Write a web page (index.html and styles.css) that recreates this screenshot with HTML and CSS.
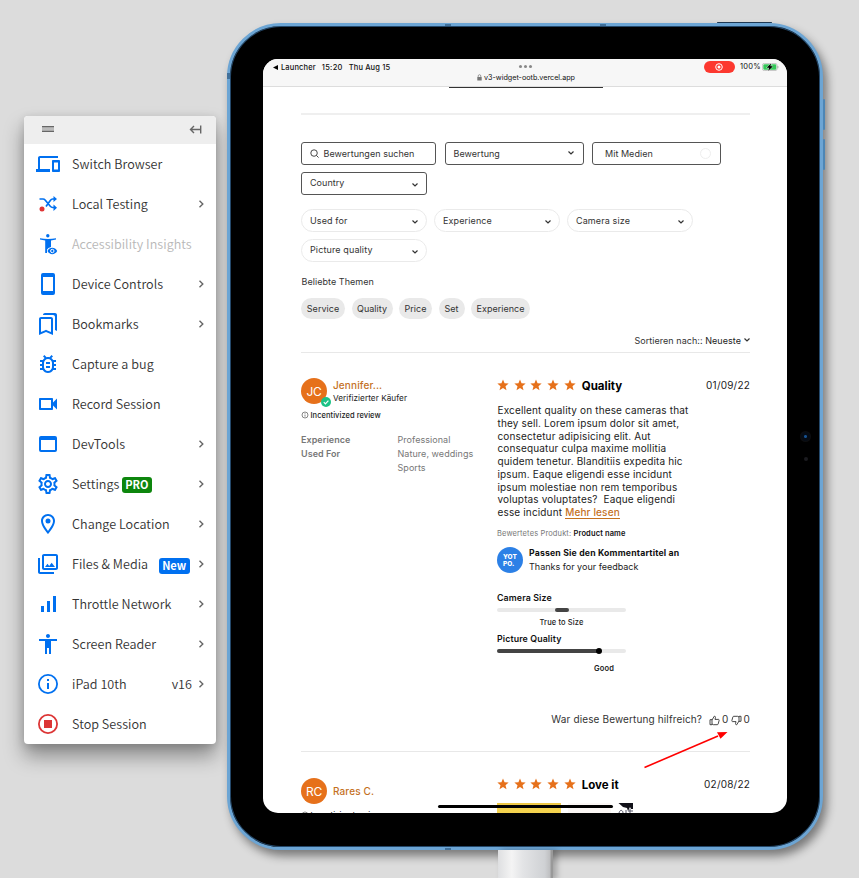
FILE: index.html
```
<!DOCTYPE html>
<html lang="de">
<head>
<meta charset="utf-8">
<title>v3-widget-ootb.vercel.app</title>
<link rel="stylesheet" href="styles.css">
</head>
<body>
<svg class="defs" aria-hidden="true">
  <symbol id="chev" viewBox="0 0 8 8"><path d="M1.500 2.500 4 5l2.500-2.500" fill="none" stroke="currentColor" stroke-width="1.200"/></symbol>
  <symbol id="next" viewBox="0 0 6 10"><path d="M1.500 1.800 4.800 5 1.500 8.200" fill="none" stroke="#666" stroke-width="1.400"/></symbol>
  <symbol id="star" viewBox="0 0 24 24"><path d="M12 1l3.100 7.600 8.200.600-6.300 5.300 2 8L12 18.100 5 22.500l2-8L.7 9.200l8.200-.600z"/></symbol>
  <symbol id="info" viewBox="0 0 8 8"><circle cx="4" cy="4" r="3" fill="none" stroke="#555" stroke-width=".7"/><path d="M4 3.600v2M4 2.200v.7" stroke="#555" stroke-width=".7"/></symbol>
  <symbol id="thumb" viewBox="0 0 11 11"><path d="M1 4.700h2v5H1zM3 5l2.300-3.800c1.200 0 1.300.8 1.100 1.500L6 4.400h3.300c.8 0 1 .5.800 1.100l-.9 3.400c-.2.600-.5.800-1 .8H4.400L3 9" fill="none" stroke="#333" stroke-width=".9" stroke-linejoin="round"/></symbol>
</svg>
<nav class="menu">
  <header class="menu-head">
    <svg class="grip" viewBox="0 0 12 6"><path d="M0 .8h12M0 5.200h12" stroke="#666" stroke-width="1.500"/><path d="M0 3h12" stroke="#bbb" stroke-width="2"/></svg>
    <svg class="collapse" viewBox="0 0 13 9"><path d="M11.700.5v8M11 4.500H1.500M5 1 1.500 4.500 5 8" fill="none" stroke="#666" stroke-width="1.400"/></svg>
  </header>
  <div class="item"><svg viewBox="0 0 24 24"><path d="M4 6h18V4H4c-1.100 0-2 .9-2 2v11H0v3h14v-3H4V6zm19 2h-6c-.55 0-1 .45-1 1v10c0 .55.45 1 1 1h6c.55 0 1-.45 1-1V9c0-.55-.45-1-1-1zm-1 9.500h-4v-7h4z"/></svg><span>Switch Browser</span></div>
  <div class="item"><svg viewBox="0 0 24 24"><path d="M3.500 7H7c1 0 1.600.4 2.300 1.200l5 6.100c.7.800 1.300 1.200 2.300 1.200H19M10 14.500l4.300-6C15 7.500 15.600 7 16.600 7H19" fill="none" stroke="#0070f0" stroke-width="1.700"/><path d="M17.500 4l3.500 3-3.500 3zM17.500 12.500l3.500 3.200-3.500 3.300z"/><circle cx="6" cy="17" r="2.500" fill="#e03535"/></svg><span>Local Testing</span><svg class="next"><use href="#next"/></svg></div>
  <div class="item off"><svg viewBox="0 0 24 24"><circle cx="11.800" cy="3.800" r="1.700"/><path d="M4 6.300c5 1 11 1 16 0v1.300l-5 .8V15l-2.500 1-1.500 1.500V21H9.200V8.400L4 7.600z"/><path d="M11.500 19c2-4.200 7.500-4.200 9.700 0-2.200 4.200-7.700 4.200-9.700 0z"/><circle cx="16.300" cy="19" r="1.700" fill="#0070f0" stroke="#fff"/></svg><span>Accessibility Insights</span></div>
  <div class="item"><svg viewBox="0 0 24 24"><path fill-rule="evenodd" d="M7 1h10a2 2 0 0 1 2 2v18a2 2 0 0 1-2 2H7a2 2 0 0 1-2-2V3a2 2 0 0 1 2-2zm0 4v14h10V5z"/></svg><span>Device Controls</span><svg class="next"><use href="#next"/></svg></div>
  <div class="item"><svg viewBox="0 0 24 24"><path d="M15 7v12.970l-4.210-1.810-.79-.34-.79.34L5 19.970V7h10m4-6H8.990C7.890 1 7 1.900 7 3h10c1.100 0 2 .9 2 2v13l2 1V3c0-1.100-.9-2-2-2zm-4 4H5c-1.100 0-2 .9-2 2v16l7-3 7 3V7c0-1.100-.9-2-2-2z"/></svg><span>Bookmarks</span><svg class="next"><use href="#next"/></svg></div>
  <div class="item"><svg viewBox="0 0 24 24"><path d="M20 8h-2.810c-.45-.78-1.070-1.450-1.820-1.960L17 4.410 15.590 3l-2.170 2.170C12.960 5.060 12.490 5 12 5s-.96.060-1.410.17L8.410 3 7 4.410l1.620 1.630C7.880 6.550 7.260 7.220 6.810 8H4v2h2.090c-.05.33-.09.66-.09 1v1H4v2h2v1c0 .34.04.67.09 1H4v2h2.810c1.040 1.790 2.970 3 5.190 3s4.150-1.210 5.190-3H20v-2h-2.090c.05-.33.09-.66.09-1v-1h2v-2h-2v-1c0-.34-.04-.67-.09-1H20V8zm-4 7c0 2.200-1.800 4-4 4s-4-1.800-4-4v-4c0-2.200 1.800-4 4-4s4 1.800 4 4v4zm-6-1h4v2h-4zm0-4h4v2h-4z"/></svg><span>Capture a bug</span></div>
  <div class="item"><svg viewBox="0 0 24 24"><path d="M15 8v8H5V8h10m1-2H4c-.55 0-1 .45-1 1v10c0 .55.45 1 1 1h12c.55 0 1-.45 1-1v-3.500l4 4v-11l-4 4V7c0-.55-.45-1-1-1z"/></svg><span>Record Session</span></div>
  <div class="item"><svg viewBox="0 0 24 24"><path fill-rule="evenodd" d="M5 4h14a2 2 0 0 1 2 2v12a2 2 0 0 1-2 2H5a2 2 0 0 1-2-2V6a2 2 0 0 1 2-2zm0 4v10h14V8z"/></svg><span>DevTools</span><svg class="next"><use href="#next"/></svg></div>
  <div class="item"><svg viewBox="0 0 24 24"><path d="M19.430 12.980c.04-.32.07-.64.07-.98s-.03-.66-.07-.98l2.110-1.650c.19-.15.24-.42.12-.64l-2-3.460c-.09-.16-.26-.25-.44-.25-.06 0-.12.010-.17.030l-2.490 1c-.52-.4-1.080-.73-1.690-.98l-.38-2.650C14.460 2.180 14.250 2 14 2h-4c-.25 0-.46.18-.49.42l-.38 2.650c-.61.25-1.170.59-1.690.98l-2.490-1c-.06-.02-.12-.03-.18-.03-.17 0-.34.09-.43.25l-2 3.460c-.13.22-.07.49.12.64l2.110 1.650c-.04.32-.07.65-.07.98s.03.66.07.98l-2.110 1.650c-.19.15-.24.42-.12.64l2 3.460c.09.16.26.25.44.25.06 0 .12-.01.17-.03l2.490-1c.52.4 1.080.73 1.690.98l.38 2.650c.03.24.24.42.49.42h4c.25 0 .46-.18.49-.42l.38-2.650c.61-.25 1.170-.59 1.690-.98l2.490 1c.06.02.12.03.18.03.17 0 .34-.09.43-.25l2-3.460c.12-.22.07-.49-.12-.64l-2.110-1.650zm-1.980-1.710c.04.31.05.52.05.73s-.02.43-.05.73l-.14 1.130.89.7 1.080.84-.7 1.210-1.270-.51-1.040-.42-.9.68c-.43.32-.84.56-1.250.73l-1.060.43-.16 1.130-.2 1.350h-1.400l-.19-1.350-.16-1.130-1.060-.43c-.43-.18-.83-.41-1.230-.71l-.91-.7-1.060.43-1.270.51-.7-1.210 1.080-.84.89-.7-.14-1.130c-.03-.31-.05-.54-.05-.74s.02-.43.05-.73l.14-1.130-.89-.7-1.080-.84.7-1.210 1.270.51 1.040.42.9-.68c.43-.32.84-.56 1.250-.73l1.060-.43.16-1.130.2-1.350h1.390l.19 1.350.16 1.130 1.060.43c.43.18.83.41 1.230.71l.91.7 1.060-.43 1.270-.51.7 1.210-1.070.85-.89.7.14 1.130zM12 8c-2.210 0-4 1.790-4 4s1.790 4 4 4 4-1.790 4-4-1.790-4-4-4zm0 6c-1.100 0-2-.9-2-2s.9-2 2-2 2 .9 2 2-.9 2-2 2z"/></svg><span>Settings</span><b class="tag pro">PRO</b><svg class="next"><use href="#next"/></svg></div>
  <div class="item"><svg viewBox="0 0 24 24"><path d="M12 2C8.130 2 5 5.130 5 9c0 5.250 7 13 7 13s7-7.750 7-13c0-3.870-3.130-7-7-7zM7 9c0-2.760 2.240-5 5-5s5 2.240 5 5c0 2.880-2.880 7.190-5 9.880C9.920 16.210 7 11.850 7 9z"/><circle cx="12" cy="9" r="2.500"/></svg><span>Change Location</span><svg class="next"><use href="#next"/></svg></div>
  <div class="item"><svg viewBox="0 0 24 24"><path d="M20 4v12H8V4h12m0-2H8c-1.100 0-2 .9-2 2v12c0 1.100.9 2 2 2h12c1.100 0 2-.9 2-2V4c0-1.100-.9-2-2-2zm-8.500 9.670l1.690 2.260 2.480-3.100L19 15H9zM2 6v14c0 1.100.9 2 2 2h14v-2H4V6H2z"/></svg><span>Files &amp; Media</span><b class="tag new">New</b><svg class="next"><use href="#next"/></svg></div>
  <div class="item"><svg viewBox="0 0 24 24"><path d="M5 14h3v6H5zM11 9h3v11h-3zM17 4h3v16h-3z"/></svg><span>Throttle Network</span><svg class="next"><use href="#next"/></svg></div>
  <div class="item"><svg viewBox="0 0 24 24"><path d="M12 2c1.100 0 2 .9 2 2s-.9 2-2 2-2-.9-2-2 .9-2 2-2zm9 7h-6v13h-2v-6h-2v6H9V9H3V7h18v2z"/></svg><span>Screen Reader</span><svg class="next"><use href="#next"/></svg></div>
  <div class="item"><svg viewBox="0 0 24 24"><circle cx="12" cy="12" r="9.100" fill="none" stroke="#0070f0" stroke-width="1.800"/><path d="M11 11h2v6h-2zM11 7h2v2h-2z"/></svg><span>iPad 10th</span><span class="ver">v16</span><svg class="next"><use href="#next"/></svg></div>
  <div class="item stop"><svg viewBox="0 0 24 24"><circle cx="12" cy="12" r="9.100" fill="none" stroke="#dc3535" stroke-width="1.800"/><path d="M8 8h8v8H8z"/></svg><span>Stop Session</span></div>
</nav>

<main class="tablet">
  <i class="btn power"></i><i class="btn vol1"></i><i class="btn vol2"></i>
  <i class="seam s1"></i><i class="seam s2"></i><i class="seam s3"></i><i class="seam s4"></i>
  <i class="lens"></i><i class="sensor"></i>
  <i class="cable"></i>
  <div class="screen">
    <header class="status">
      <div class="left"><svg viewBox="0 0 5 5"><path d="M5 0v5L0 2.500z"/></svg><span class="launcher">Launcher</span><span class="clock">15:20</span><span class="day">Thu Aug 15</span></div>
      <div class="mid"><div class="dots"><i></i><i></i><i></i></div><div class="url"><svg viewBox="0 0 5 7"><path d="M1.200 3V2a1.300 1.300 0 0 1 2.600 0v1" fill="none" stroke="#777" stroke-width=".7"/><path d="M.3 3h4.400v3.500H.3z" fill="#777"/></svg><span>v3-widget-ootb.vercel.app</span></div></div>
      <div class="right"><i class="rec"><svg viewBox="0 0 8 8"><circle cx="4" cy="4" r="3.300" fill="none" stroke="#fff" stroke-width="1"/><circle cx="4" cy="4" r="1.500" fill="#fff"/></svg></i><span>100%</span><svg class="bat" viewBox="0 0 17 8"><rect x=".4" y=".4" width="14.700" height="7.200" rx="2" fill="#fff" stroke="#aaa" stroke-width=".7"/><rect x="1.300" y="1.200" width="13" height="5.600" rx="1.200" fill="#35c759"/><path d="M15.900 3v2.200" stroke="#aaa"/><path d="M9.200.2 4.600 4.800h2.500l-1 3.200 4.900-4.800H8.400z" stroke="#fff" stroke-width=".7" paint-order="stroke"/></svg></div>
    </header>
    <div class="page">
      <i class="cut"></i>
      <i class="rule thick"></i>
      <div class="filters">
        <div class="box search"><svg viewBox="0 0 10 10"><circle cx="4.500" cy="4.500" r="3.600"/><path d="M7.200 7.200 9.500 9.500"/></svg><span>Bewertungen suchen</span></div>
        <div class="box rating"><span>Bewertung</span><svg class="chev"><use href="#chev"/></svg></div>
        <div class="box media"><span>Mit Medien</span><i></i></div>
        <div class="box country"><span>Country</span><svg class="chev"><use href="#chev"/></svg></div>
      </div>
      <div class="pills">
        <div class="pill"><span>Used for</span><svg class="chev"><use href="#chev"/></svg></div>
        <div class="pill"><span>Experience</span><svg class="chev"><use href="#chev"/></svg></div>
        <div class="pill"><span>Camera size</span><svg class="chev"><use href="#chev"/></svg></div>
        <div class="pill"><span>Picture quality</span><svg class="chev"><use href="#chev"/></svg></div>
      </div>
      <div class="topics">Beliebte Themen</div>
      <div class="chips"><span class="c1">Service</span><span class="c2">Quality</span><span class="c3">Price</span><span class="c4">Set</span><span class="c5">Experience</span></div>
      <div class="sort"><span>Sortieren nach:: <em>Neueste</em></span><svg class="chev"><use href="#chev"/></svg></div>
      <i class="rule"></i>
      <article class="review first">
        <section class="who">
          <div class="person"><div class="avatar">JC<i class="check"><svg viewBox="0 0 10 10"><path d="M2.800 5.200 4.400 6.800 7.400 3.600" fill="none" stroke="#fff" stroke-width="1.200"/></svg></i></div><div><div class="name">Jennifer...</div><div class="verified">Verifizierter Käufer</div></div></div>
          <div class="incent"><svg><use href="#info"/></svg><span>Incentivized review</span></div>
          <dl class="facts"><dt>Experience</dt><dd>Professional</dd><dt>Used For</dt><dd>Nature, weddings<br>Sports</dd></dl>
        </section>
        <section class="what">
          <div class="head"><div class="stars"><svg><use href="#star"/></svg><svg><use href="#star"/></svg><svg><use href="#star"/></svg><svg><use href="#star"/></svg><svg><use href="#star"/></svg></div><h3>Quality</h3><time>01/09/22</time></div>
          <p>Excellent quality on these cameras that<br>they sell. Lorem ipsum dolor sit amet,<br>consectetur adipisicing elit. Aut<br>consequatur culpa maxime mollitia<br>quidem tenetur. Blanditiis expedita hic<br>ipsum. Eaque eligendi esse incidunt<br>ipsum molestiae non rem temporibus<br>voluptas voluptates?&nbsp; Eaque eligendi<br>esse incidunt <a>Mehr lesen</a></p>
          <div class="product">Bewertetes Produkt: <b>Product name</b></div>
          <div class="reply"><div class="logo">YOT<br>PO.</div><div><div class="rt">Passen Sie den Kommentartitel an</div><div class="rb">Thanks for your feedback</div></div></div>
          <div class="label">Camera Size</div>
          <div class="bar"><i class="centre"></i></div>
          <div class="val">True to Size</div>
          <div class="label two">Picture Quality</div>
          <div class="bar"><i class="fill"></i></div>
          <div class="val good">Good</div>
          <div class="helpful"><span>War diese Bewertung hilfreich?</span><svg><use href="#thumb"/></svg><span class="n">0</span><svg class="down"><use href="#thumb"/></svg><span class="n">0</span></div>
        </section>
      </article>
      <i class="rule"></i>
      <article class="review second">
        <section class="who">
          <div class="person"><div class="avatar">RC</div><div class="name">Rares C.</div></div>
          <div class="incent"><svg><use href="#info"/></svg><span>Incentivized review</span></div>
        </section>
        <section class="what">
          <div class="head"><div class="stars"><svg><use href="#star"/></svg><svg><use href="#star"/></svg><svg><use href="#star"/></svg><svg><use href="#star"/></svg><svg><use href="#star"/></svg></div><h3>Love it</h3><time>02/08/22</time></div>
          <div class="photos"><i></i><i></i><svg viewBox="0 0 16 11"><path d="M.5 0H15v6h-2l-1-2-2 4-1-3-4-1z" fill="#111119"/><path d="M1 10c1-4 4-3 4 0M8 7v4M12 6v4M10 8h5" fill="none" stroke="#556" stroke-width="1"/></svg></div>
        </section>
      </article>
    </div>
    <i class="home"></i>
  </div>
</main>
<svg class="arrow" viewBox="0 0 90 42"><path d="M4.500 37.500 78 6" stroke="#f00" stroke-width="1.600"/><path d="M87.500 2 80.500 8.800 77 2.200z" fill="#f00"/></svg>
</body>
</html>
```

FILE: styles.css
```
* { box-sizing: border-box; }
body { margin: 0; width: 859px; height: 878px; overflow: hidden; position: relative; background: #dcdcdc; display: flex; align-items: flex-start; font-family: Inter, "Liberation Sans", sans-serif; color: #222; }
i, em { font-style: normal; }
svg { display: block; flex: none; }
.defs { position: absolute; width: 0; height: 0; }

.menu { width: 192px; height: 628px; margin: 116px 0 0 24px; background: #fff; border-radius: 4px; box-shadow: 0 12px 20px rgba(0,0,0,.38), 0 2px 8px rgba(0,0,0,.12); font-family: "Noto Sans CJK SC", "Noto Sans", sans-serif; flex: none; }
.menu-head { height: 28px; background: #eee; border-radius: 4px 4px 0 0; display: flex; align-items: center; justify-content: space-between; padding: 0 14px 2px 18px; }
.grip { width: 12px; height: 6px; }
.collapse { width: 13px; height: 9px; }
.item { height: 40px; display: flex; align-items: center; padding: 0 12px; font-size: 12.600px; font-weight: 350; color: #333; white-space: nowrap; }
.item > span { padding-bottom: 2px; letter-spacing: .03px; }
.item > svg:first-child { width: 24px; height: 24px; margin-right: 12px; fill: #0070f0; }
.item .next { width: 6px; height: 10px; margin-left: auto; }
.item.off { color: #b8b8b8; }
.item.stop > svg:first-child { fill: #dc3535; }
.tag { height: 16px; line-height: 15px; border-radius: 3px; color: #fff; font-size: 11px; text-align: center; }
.pro { width: 30px; margin: 2px 0 0 2.500px; background: #0d860d; }
.new { width: 31px; margin: 4px 0 0 10.500px; background: #0070f0; }
.ver { margin-left: auto; margin-right: 6px; }
.item .ver + .next { margin-left: 0; }

.tablet { position: relative; width: 596px; height: 827px; margin: 23px 0 0 11px; flex: none; border-radius: 54px; background: #000; border: 3px solid #6ca5d4; box-shadow: inset 0 0 0 1px #24486a, 4px 6px 10px rgba(0,0,0,.45); padding: 33px 0 0 33px; }
.btn { position: absolute; background: #4d86b5; border-radius: 1px; }
.power { left: 487px; top: -4px; width: 55px; height: 1px; background: #1d3852; }
.vol1 { right: -5px; top: 73px; width: 2px; height: 31px; }
.vol2 { right: -5px; top: 113px; width: 2px; height: 31px; }
.seam { position: absolute; background: #41719b; }
.s1 { left: 215px; top: -2px; width: 6px; height: 2px; }
.s2 { left: 370px; top: -2px; width: 6px; height: 2px; }
.s3 { left: -3px; top: 47px; width: 3px; height: 6px; }
.s4 { left: 215px; bottom: -3px; width: 6px; height: 2px; }
.lens { position: absolute; left: 570px; top: 405px; width: 11px; height: 11px; border-radius: 50%; background: radial-gradient(#15508f 0 1px, #050b14 2px 4px, #0c0d0f 5px); }
.sensor { position: absolute; left: 574px; top: 431px; width: 4px; height: 4px; border-radius: 50%; background: #1b1b1f; }
.cable { position: absolute; left: 268px; top: 824px; width: 55px; height: 30px; background: linear-gradient(90deg, #dedfe1, #f4f4f4 25%, #e3e4e6 45%, #cfd1d4 85%, #bfc0c2 94%, #999 97%); box-shadow: 4px 0 6px rgba(0,0,0,.25); }
.screen { position: relative; width: 524px; height: 754px; border-radius: 15px; overflow: hidden; background: #fff; }

.status { height: 28px; background: #f7f7f7; border-bottom: 1px solid #ddd; display: grid; grid-template-columns: 1fr auto 1fr; font-size: 7.500px; color: #111; white-space: nowrap; }
.left { display: flex; align-items: center; height: 16px; padding-left: 10px; font-weight: 500; letter-spacing: .13px; }
.left svg { width: 5px; height: 5px; margin-right: 3px; }
.clock { margin: 0 6px; letter-spacing: .3px; }
.mid { width: 110px; }
.dots { display: flex; gap: 2px; justify-content: center; padding-top: 6px; }
.dots i { width: 3px; height: 3px; border-radius: 50%; background: #888; }
.url { display: flex; align-items: center; justify-content: center; gap: 2px; height: 19px; padding-left: 2px; font-size: 7.200px; }
.url svg { width: 5px; height: 7px; }
.right { display: flex; align-items: center; justify-content: flex-end; height: 15px; padding-right: 8px; letter-spacing: .3px; }
.rec { width: 31px; height: 12px; border-radius: 6px; background: #fc382f; margin-right: 5px; display: grid; place-items: center; }
.rec svg { width: 8px; height: 8px; }
.bat { width: 17px; height: 8px; margin-left: 1px; }

.page { width: 449px; margin-left: 38px; font-size: 9px; letter-spacing: .12px; white-space: nowrap; }
.page i { display: block; }
.cut { height: 1px; width: 154px; margin-left: 148px; background: #333; }
.rule { height: 1px; background: #e8e8e8; }
.rule.thick { height: 2px; margin-top: 25px; background: #efefef; }
.filters { display: flex; flex-wrap: wrap; gap: 7px 8.500px; margin-top: 27px; }
.box { height: 23px; border: 1px solid #555; border-radius: 3px; display: flex; align-items: center; padding: 0 8px 1px; color: #333; }
.box span { letter-spacing: .04px; }
.search { width: 135px; }
.search svg { width: 9px; height: 9px; margin-right: 4.500px; fill: none; stroke: #333; stroke-width: 1; }
.rating { width: 139px; }
.media { width: 129px; padding-left: 12px; }
.media i { width: 11px; height: 11px; border: 1px solid #eee; border-radius: 50%; margin-left: auto; margin-right: 1px; }
.country { width: 126px; padding: 0 7px 2px 8px; }
.chev { width: 8px; height: 8px; margin-left: auto; }
.pills { display: flex; flex-wrap: wrap; gap: 7px; margin-top: 14px; }
.pill { width: 126px; height: 23px; border: 1px solid #eaeaea; border-radius: 12px; padding: 0 7px 1px 8px; display: flex; align-items: center; color: #333; }
.pill:last-child { padding-bottom: 2px; }
.pill .chev, .country .chev { margin-top: 4px; }
.topics { height: 14px; line-height: 14px; margin-top: 13px; padding-left: .500px; color: #333; letter-spacing: .05px; }
.chips { display: flex; margin-top: 9px; gap: 6.500px; }
.chips span { height: 21px; line-height: 21px; border-radius: 11px; background: #e9e9e9; text-align: center; color: #333; letter-spacing: .02px; }
.c1 { width: 44px; } .c2 { width: 41px; } .c3 { width: 33px; } .c4 { width: 26px; } .c5 { width: 59px; }
.sort { display: flex; align-items: center; justify-content: flex-end; height: 14px; margin: 14px 0 5px; color: #333; letter-spacing: .05px; }
.sort .chev { margin-left: 2px; margin-right: -1px; margin-bottom: 1px; }
.sort em { color: #222; }
.review { display: grid; grid-template-columns: 196px 1fr; }
.first { height: 398px; padding-top: 25px; }
.person { display: flex; align-items: center; height: 27px; margin-top: -1px; }
.avatar { position: relative; width: 26px; height: 26px; border-radius: 50%; background: #e6711b; color: #fff; font-size: 12px; letter-spacing: -.2px; line-height: 27px; text-align: center; margin-right: 6px; flex: none; }
.check { position: absolute; right: -4px; bottom: -3px; width: 10px; height: 10px; border-radius: 50%; background: #1cc286; }
.name { font-size: 10px; line-height: 13px; font-weight: 500; color: #c4711f; }
.first .name { padding-top: 2px; margin-bottom: -1px; }
.second .name { padding-top: 1px; }
.verified { font-size: 8.200px; line-height: 14px; letter-spacing: .05px; }
.incent { display: flex; align-items: center; height: 12px; margin-top: 5px; font-size: 7.500px; font-weight: 500; letter-spacing: .05px; gap: 1.500px; }
.incent svg { width: 8px; height: 8px; }
.facts { margin: 12px 0 0; display: grid; grid-template-columns: 96.500px 1fr; line-height: 14px; color: #777; letter-spacing: .05px; }
.facts dt { font-weight: 600; }
.facts dd { margin: 0; }
.head { display: flex; align-items: center; height: 14px; margin-top: 0; }
.stars { display: flex; gap: 4.700px; fill: #e6711b; }
.stars svg { width: 12px; height: 12px; }
.head h3 { margin: 2px 0 0 6px; font-size: 11.500px; letter-spacing: 0; font-weight: 700; color: #000; }
.head time { margin-left: auto; font-size: 10px; letter-spacing: .2px; }
.what p { margin: 12px 0 0; padding-left: .500px; font-size: 10px; line-height: 12.780px; letter-spacing: .15px; }
.what a { color: #c4711f; font-weight: 500; border-bottom: 1px solid #c4711f; }
.product { font-size: 7.500px; line-height: 12px; margin-top: 9px; color: #777; letter-spacing: .13px; }
.product b { color: #111; font-weight: 600; }
.reply { display: flex; align-items: center; margin-top: 6px; }
.logo { width: 26px; height: 26px; border-radius: 50%; background: #2c80e6; color: #fff; font-size: 6.500px; font-weight: 800; line-height: 6.500px; text-align: left; padding: 7px 0 0 6px; letter-spacing: 0; margin-right: 6px; }
.rt { font-weight: 700; font-size: 8.700px; line-height: 14px; color: #111; letter-spacing: .18px; }
.rb { line-height: 14px; letter-spacing: 0; }
.label { font-weight: 600; font-size: 8.800px; line-height: 12px; margin-top: 18px; color: #111; }
.bar { height: 4px; width: 129px; border-radius: 2px; background: #e9e9e9; margin-top: 4px; }
.centre { width: 14px; height: 4px; border-radius: 2px; background: #444; margin-left: 58px; }
.fill { position: relative; width: 102px; height: 4px; border-radius: 2px; background: #444; }
.fill::after { content: ""; position: absolute; right: -3px; top: -1px; width: 6px; height: 6px; border-radius: 50%; background: #000; }
.val { width: 129px; text-align: center; font-size: 7.500px; font-weight: 500; line-height: 10px; margin-top: 6px; }
.label.two { margin-top: 5px; }
.val.good { text-align: right; padding-right: 12px; margin-top: 11px; font-weight: 600; }
.helpful { display: flex; align-items: center; justify-content: flex-end; height: 14px; margin-top: 38px; font-size: 10px; color: #333; letter-spacing: .13px; }
.helpful svg { width: 11px; height: 11px; margin: 2px 2px 0 7px; }
.helpful svg.down { margin-left: 2px; transform: rotate(180deg); }
.second { padding-top: 25px; }
.second .incent { margin-top: 5px; }
.second .person { margin-top: 0; }
.photos { display: flex; margin-top: 12px; gap: 7px; }
.photos i { width: 64px; height: 60px; background: linear-gradient(#ecc544, #f4d34e 4px, #f5d452); }
.photos i + i { width: 43px; background: #fbf7f5; }
.photos svg { width: 16px; height: 11px; }
.home { position: absolute; left: 175px; top: 746px; width: 175px; height: 3px; border-radius: 2px; background: #000; }
.arrow { position: absolute; left: 640px; top: 730px; width: 90px; height: 42px; }
```
